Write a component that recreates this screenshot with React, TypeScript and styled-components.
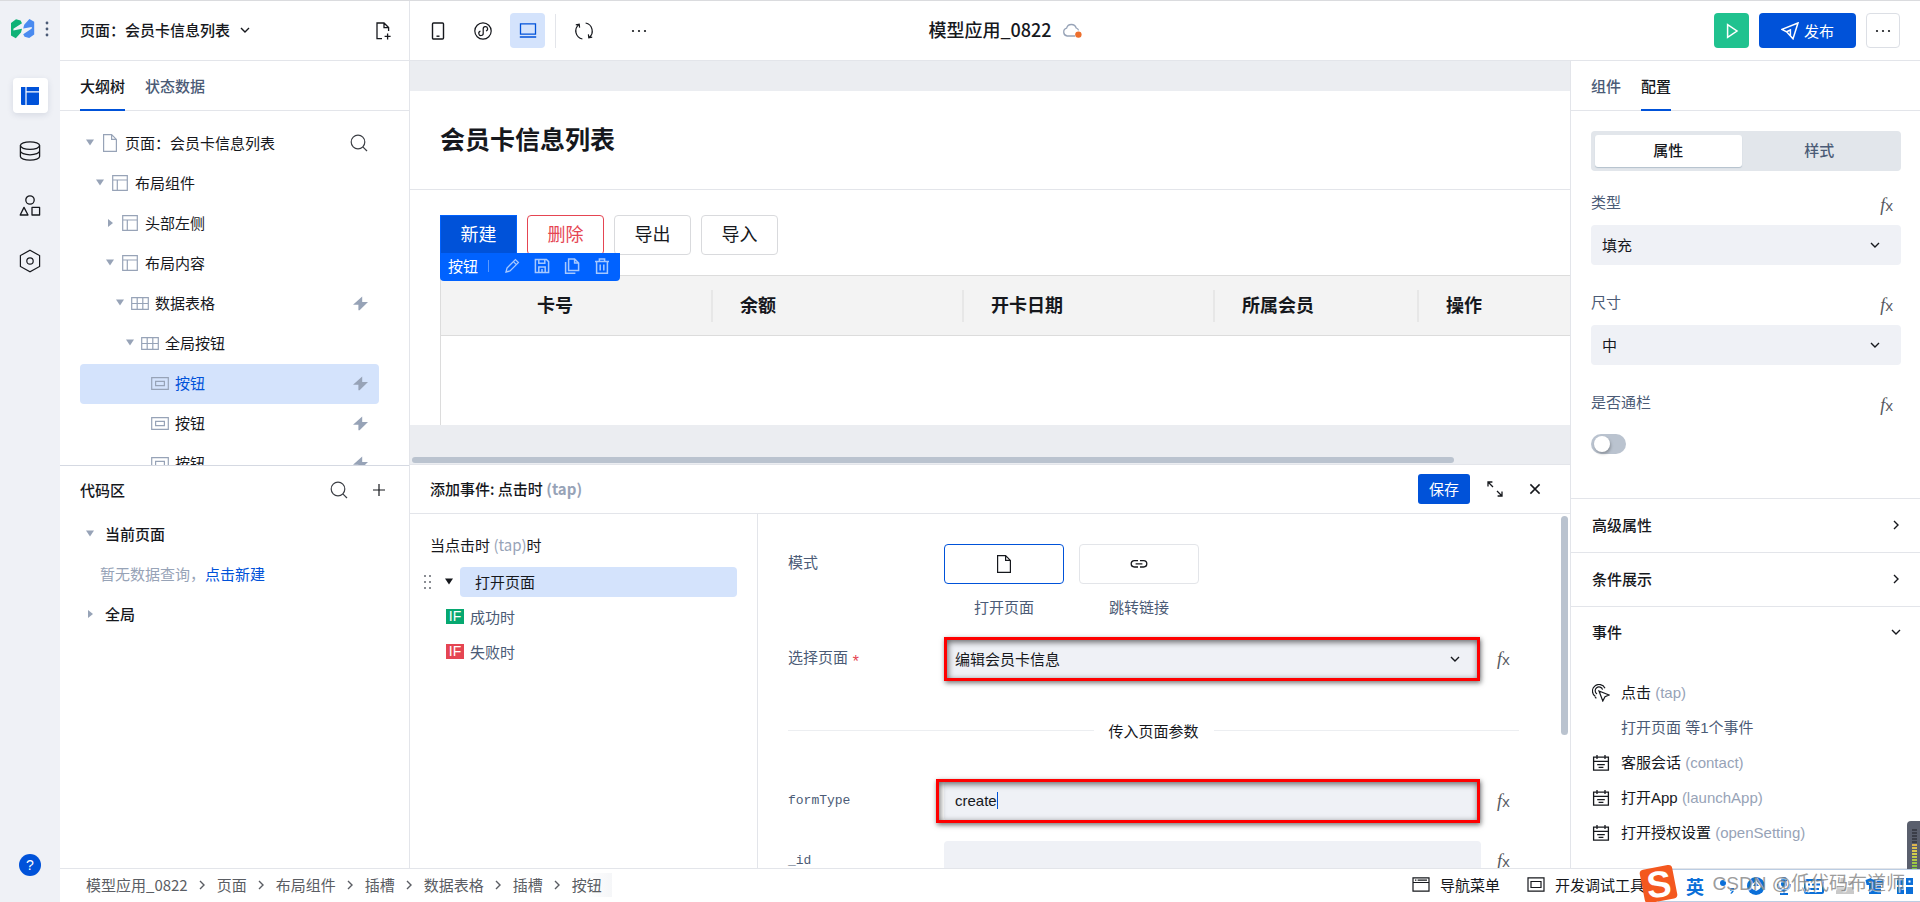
import React from "react";
import styled, { createGlobalStyle, css } from "styled-components";

const sans = `"Liberation Sans", "Noto Sans CJK SC", sans-serif`;
const cjk = `"Noto Sans CJK SC", "Noto Sans", sans-serif`;

const c = {
  blue: "#0052d9",
  bright: "#0062ff",
  paleBlue: "#d4e3fc",
  line: "#e3e5ea",
  rail: "#eff1f6",
  field: "#eff1f6",
  canvas: "#ebedf1",
  ink: "#16181d",
  slate: "#4b5b76",
  mist: "#97a3b7",
  bar: "#bac3cf",
  red: "#e54552",
};

const GlobalStyle = createGlobalStyle`
  * { box-sizing: border-box; }
  body { margin: 0; font: 15px/20px ${cjk}; color: ${c.ink}; background: #fff; overflow: hidden; }
  button, input, select { font: inherit; color: inherit; }
  h1, h2, ul, ol, p { margin: 0; padding: 0; font-size: inherit; }
  ul, ol { list-style: none; }
  a { text-decoration: none; }
  svg { display: block; flex: none; }
`;

/* ---------- shell ---------- */

const Shell = styled.div`
  display: grid;
  grid-template-columns: 60px minmax(0, 1fr);
  height: 100vh;
  border-top: 1px solid #dadbde;
  position: relative;
`;

const Rail = styled.nav`
  background: ${c.rail};
  display: flex;
  flex-direction: column;
  align-items: center;
  padding-bottom: 26px;
`;

const Brand = styled.div`
  display: flex;
  align-items: center;
  gap: 10px;
  height: 56px;
  margin-bottom: 21px;
`;

const IconButton = styled.button<{ $tone?: string }>`
  border: 0;
  padding: 0;
  background: none;
  width: 20px;
  height: 20px;
  color: ${(p) => p.$tone ?? c.ink};
  display: flex;
  align-items: center;
  justify-content: center;
  flex: none;
`;

const RailButton = styled(IconButton)<{ $active?: boolean }>`
  width: 35px;
  height: 35px;
  margin-bottom: 20px;
  border-radius: 4px;
  ${(p) =>
    p.$active &&
    css`
      background: #fff;
      color: ${c.blue};
      box-shadow: 0 2px 6px rgba(30, 50, 90, 0.12);
    `}
`;

const Help = styled.button`
  margin-top: auto;
  width: 22px;
  height: 22px;
  padding: 0;
  border: 0;
  border-radius: 50%;
  background: ${c.blue};
  color: #fff;
  font: 14px/22px ${sans};
`;

const Main = styled.div`
  display: grid;
  grid-template-rows: 60px minmax(0, 1fr) 34px;
  min-width: 0;
  min-height: 0;
`;

const columns = "350px minmax(0, 1fr) 350px";

/* ---------- header ---------- */

const Header = styled.header`
  display: grid;
  grid-template-columns: ${columns};
  border-bottom: 1px solid ${c.line};
`;

const PagePicker = styled.div`
  display: flex;
  align-items: center;
  padding: 0 16px 0 20px;
  border-right: 1px solid ${c.line};
  justify-content: space-between;
`;

const PickerButton = styled.button`
  display: flex;
  align-items: center;
  gap: 10px;
  border: 0;
  padding: 0 0 2px;
  background: none;
  font-weight: 500;
`;

const HeaderMiddle = styled.div`
  display: grid;
  grid-template-columns: 1fr auto 1fr;
  align-items: center;
`;

const Tools = styled.div`
  display: flex;
  align-items: center;
  padding-left: 10px;
  gap: 10px;
`;

const ToolGroup = styled.div`
  display: flex;
  gap: 20px;
`;

const ToolButton = styled(IconButton)<{ $active?: boolean }>`
  width: 35px;
  height: 35px;
  border-radius: 4px;
  ${(p) =>
    p.$active &&
    css`
      background: ${c.paleBlue};
      color: ${c.blue};
    `}
`;

const ToolDivider = styled.span`
  width: 1px;
  height: 34px;
  background: ${c.line};
`;

const AppName = styled.h1`
  font-size: 18px;
  line-height: 24px;
  font-weight: 500;
  padding-bottom: 3px;
`;

const CloudSlot = styled.div`
  padding-left: 10px;
`;

const HeaderActions = styled.div`
  display: flex;
  align-items: center;
  justify-content: flex-end;
  gap: 10px;
  padding-right: 20px;
`;

const ActionButton = styled.button<{ $kind: "run" | "publish" | "more" }>`
  height: 35px;
  width: ${(p) => (p.$kind === "publish" ? 97 : p.$kind === "run" ? 35 : 34)}px;
  border: ${(p) => (p.$kind === "more" ? "1px solid #dcdfe5" : "0")};
  border-radius: 4px;
  padding: 0;
  background: ${(p) =>
    p.$kind === "publish" ? c.blue : p.$kind === "run" ? "#20c28f" : "#fff"};
  color: ${(p) => (p.$kind === "more" ? c.ink : "#fff")};
  display: flex;
  align-items: center;
  justify-content: center;
  gap: 5px;
`;

/* ---------- workspace ---------- */

const Workspace = styled.div`
  display: grid;
  grid-template-columns: ${columns};
  min-height: 0;
`;

const LeftPanel = styled.aside`
  display: grid;
  grid-template-rows: 50% minmax(0, 1fr);
  min-height: 0;
  border-right: 1px solid ${c.line};
`;

const RightPanel = styled.aside`
  display: flex;
  flex-direction: column;
  min-height: 0;
  overflow: hidden;
  border-left: 1px solid ${c.line};
`;

const Half = styled.section`
  min-height: 0;
  overflow: hidden;
  & + & {
    border-top: 1px solid #d5d9e2;
  }
`;

const TabBar = styled.div`
  display: flex;
  flex: none;
  gap: 20px;
  height: 50px;
  padding-left: 20px;
  border-bottom: 1px solid ${c.line};
`;

const Tab = styled.button<{ $active?: boolean }>`
  border: 0;
  padding: 2px 0 0;
  height: 50px;
  background: none;
  font-weight: 500;
  color: ${(p) => (p.$active ? c.ink : c.slate)};
  border-bottom: 2px solid ${(p) => (p.$active ? c.blue : "transparent")};
`;

const Tree = styled.ul`
  padding: 13px 30px 0 20px;
`;

const TreeRow = styled.li<{ $level: number; $selected?: boolean }>`
  display: flex;
  align-items: center;
  height: 40px;
  padding: 0 11px 2px ${(p) => p.$level * 10}px;
  border-radius: 4px;
  color: ${(p) => (p.$selected ? c.blue : c.ink)};
  background: ${(p) => (p.$selected ? c.paleBlue : "transparent")};
`;

const TreeSlot = styled.span`
  width: 20px;
  color: ${c.mist};
  display: flex;
  justify-content: center;
`;

const TreeLabel = styled.span`
  flex: 1;
  padding-left: 5px;
`;

const Glyph = styled.span<{ $tone?: string; $bold?: boolean }>`
  color: ${(p) => p.$tone ?? c.mist};
  ${(p) => p.$bold && "font-weight: 700;"}
`;

const CodeHead = styled.div`
  display: flex;
  align-items: center;
  height: 48px;
  padding: 0 20px 0 20px;
`;

const CodeTitle = styled.h2`
  flex: 1;
  font-weight: 500;
`;

const CodeTools = styled.div`
  display: flex;
  gap: 20px;
`;

const CodeList = styled.div`
  padding: 0 20px;
`;

const CodeGroup = styled.div`
  display: flex;
  align-items: center;
  height: 40px;
  font-weight: 500;
`;

const CodeGroupName = styled.span`
  padding-left: 5px;
`;

const CodeEmpty = styled.p`
  height: 40px;
  line-height: 40px;
  padding-left: 20px;
  color: ${c.mist};
`;

const Link = styled.a`
  color: ${c.blue};
`;

const Center = styled.main`
  display: grid;
  grid-template-rows: calc(50% - 1px) minmax(0, 1fr);
  min-width: 0;
  min-height: 0;
`;

/* ---------- canvas ---------- */

const Canvas = styled.section`
  min-height: 0;
  min-width: 0;
  display: flex;
  flex-direction: column;
  background: ${c.canvas};
  padding-top: 30px;
`;

const Page = styled.div`
  flex: 1;
  min-height: 0;
  overflow: hidden;
  background: #fff;
`;

const PageHead = styled.div`
  height: 99px;
  padding: 31px 30px;
  border-bottom: 1px solid ${c.line};
`;

const PageTitle = styled.h2`
  font-size: 25px;
  line-height: 32px;
  font-weight: 700;
`;

const PageBody = styled.div`
  padding: 25px 0 0 30px;
`;

const ButtonRow = styled.div`
  display: flex;
  gap: 10px;
  margin-bottom: 20px;
  position: relative;
`;

const PageButton = styled.button<{ $kind?: "primary" | "danger" }>`
  width: 77px;
  height: 40px;
  padding: 0 0 5px;
  font-size: 18px;
  border-radius: 4px;
  border: 1px solid #d9dadd;
  background: #fff;
  ${(p) =>
    p.$kind === "primary" &&
    css`
      background: ${c.blue};
      border-color: ${c.bright};
      border-radius: 0;
      color: #fff;
    `}
  ${(p) =>
    p.$kind === "danger" &&
    css`
      border-color: ${c.red};
      color: ${c.red};
    `}
`;

const FloatingBar = styled.div`
  position: absolute;
  left: 0;
  top: 38px;
  height: 28px;
  width: 180px;
  display: flex;
  align-items: center;
  padding: 0 0 2px 8px;
  border-radius: 0 0 4px 4px;
  background: ${c.bright};
  color: #fff;
  white-space: nowrap;
`;

const FloatingRule = styled.span`
  flex: none;
  width: 1px;
  height: 12px;
  margin: 0 13px 0 10px;
  background: #5b9aff;
`;

const FloatingIcon = styled(IconButton)`
  margin-right: 10px;
  color: #a5c8ff;
`;

const DataTable = styled.table`
  width: 100%;
  table-layout: fixed;
  border-collapse: separate;
  border-spacing: 0;
  border: 1px solid #dcdcdc;
  border-right: 0;
`;

const HeadCell = styled.th<{ $width?: number }>`
  height: 60px;
  padding: 0;
  width: ${(p) => (p.$width ? `${p.$width}px` : "auto")};
  background: #f3f3f3;
  border-bottom: 1px solid #dcdcdc;
  text-align: left;
  font-size: 18px;
  font-weight: 700;
`;

const HeadText = styled.div<{ $rule?: boolean }>`
  height: 32px;
  line-height: 28px;
  padding-left: 27px;
  border-right: ${(p) => (p.$rule ? "2px solid #e7e7e7" : "0")};
`;

const EmptyCell = styled.td`
  height: 120px;
`;

const ScrollTrack = styled.div`
  height: 39px;
  padding: 32px 0 1px 2px;
`;

const ScrollThumb = styled.div`
  width: 90%;
  height: 6px;
  border-radius: 3px;
  background: ${c.bar};
`;

/* ---------- event editor ---------- */

const EventPanel = styled.section`
  min-height: 0;
  min-width: 0;
  display: flex;
  flex-direction: column;
  border-top: 1px solid ${c.line};
`;

const EventHead = styled.div`
  display: flex;
  align-items: center;
  height: 49px;
  flex: none;
  padding: 0 25px 0 20px;
  border-bottom: 1px solid ${c.line};
`;

const EventTitle = styled.h2`
  flex: 1;
  font-weight: 500;
`;

const SaveButton = styled.button`
  width: 52px;
  height: 30px;
  padding: 0;
  border: 0;
  border-radius: 3px;
  background: ${c.blue};
  color: #fff;
  margin-right: 15px;
`;

const EventTools = styled.div`
  display: flex;
  gap: 20px;
`;

const EventBody = styled.div`
  flex: 1;
  min-height: 0;
  display: grid;
  grid-template-columns: 348px minmax(0, 1fr);
`;

const Flow = styled.div`
  border-right: 1px solid ${c.line};
  padding: 20px 20px 0 10px;
`;

const FlowTitle = styled.p`
  padding-left: 10px;
  line-height: 22px;
  margin-bottom: 11px;
`;

const FlowStep = styled.div`
  display: flex;
  align-items: center;
  height: 30px;
  margin-bottom: 5px;
`;

const FlowHandle = styled.span`
  width: 40px;
  display: flex;
  align-items: center;
  justify-content: space-between;
  padding: 0 6px 0 4px;
`;

const FlowName = styled.span`
  flex: 1;
  line-height: 30px;
  padding-left: 15px;
  border-radius: 4px;
  background: ${c.paleBlue};
`;

const Branch = styled(FlowStep)`
  padding-left: 26px;
  gap: 6px;
  color: ${c.slate};
`;

const BranchTag = styled.span<{ $tone: string }>`
  width: 18px;
  height: 15px;
  background: ${(p) => p.$tone};
  color: #fff;
  font: 14px/15px ${sans};
  text-align: center;
`;

const Form = styled.form`
  position: relative;
  overflow: hidden;
  padding: 30px 51px 0 30px;
  display: flex;
  flex-direction: column;
  gap: 20px;
`;

const FormScroll = styled.div`
  position: absolute;
  right: 2px;
  top: 2px;
  width: 7px;
  height: 62%;
  border-radius: 4px;
  background: ${c.bar};
`;

const Field = styled.div`
  display: grid;
  grid-template-columns: 156px minmax(0, 1fr) 38px;
`;

const FieldLabel = styled.label<{ $code?: boolean }>`
  line-height: 35px;
  color: ${c.slate};
  ${(p) =>
    p.$code &&
    css`
      line-height: 40px;
      font-family: "Liberation Mono", monospace;
      font-size: 13px;
    `}
`;

const Required = styled.span`
  color: ${c.red};
  padding-left: 3px;
  font: 16px/16px "Liberation Mono", monospace;
  vertical-align: -4px;
`;

const Modes = styled.div`
  display: flex;
  gap: 15px;
`;

const Mode = styled.div`
  display: flex;
  flex-direction: column;
  align-items: center;
  gap: 12px;
  line-height: 22px;
  padding-bottom: 1px;
  color: ${c.slate};
`;

const ModeButton = styled.button<{ $active?: boolean }>`
  width: 120px;
  height: 40px;
  padding: 0;
  background: #fff;
  border: 1px solid ${(p) => (p.$active ? c.blue : "#e3e5e9")};
  border-radius: 4px;
  color: ${c.ink};
  display: flex;
  align-items: center;
  justify-content: center;
`;

const Control = styled.div`
  position: relative;
  height: 40px;
`;

const boxStyle = css`
  width: 100%;
  height: 40px;
  border: 0;
  border-radius: 4px;
  background: ${c.field};
  padding: 0 11px;
  outline: 0;
  appearance: none;
`;

const Select = styled.select`
  ${boxStyle}
  line-height: 20px;
`;

const TextBox = styled.input`
  ${boxStyle}
  font-family: ${sans};
`;

const SelectArrow = styled.span`
  position: absolute;
  right: 21px;
  top: 15px;
  pointer-events: none;
`;

const Caret = styled.span`
  position: absolute;
  left: 53px;
  top: 11px;
  width: 1px;
  height: 17px;
  background: ${c.blue};
`;

const Highlight = styled.span<{ $bleed?: boolean }>`
  position: absolute;
  top: -2px;
  bottom: -2px;
  left: ${(p) => (p.$bleed ? -8 : 0)}px;
  right: 1px;
  border: 3px solid #fe0000;
  box-shadow: 1px 2px 5px rgba(0, 0, 0, 0.55), inset 1px 2px 6px rgba(0, 0, 0, 0.6);
  pointer-events: none;
`;

const FxButton = styled.button`
  border: 0;
  padding: 0 0 0 16px;
  background: none;
  height: 40px;
  text-align: left;
  color: #55585e;
  font: 15px/40px "Open Sans", ${sans};
`;

const FxLetter = styled.i`
  font: italic 18px/20px "Liberation Serif", serif;
`;

const Split = styled.div`
  display: flex;
  align-items: center;
  gap: 15px;
  line-height: 24px;
  margin: 20px 0 18px;
  &::before,
  &::after {
    content: "";
    flex: 1;
    height: 1px;
    background: #eceef1;
  }
`;

/* ---------- configuration ---------- */

const Settings = styled.div`
  flex: none;
  height: 388px;
  padding: 20px 19px 0 20px;
  border-bottom: 1px solid ${c.line};
`;

const Segments = styled.div`
  display: grid;
  grid-template-columns: 49fr 52fr;
  height: 40px;
  padding: 4px;
  border-radius: 4px;
  background: #e2e6eb;
  margin-bottom: 14px;
`;

const Segment = styled.button<{ $active?: boolean }>`
  border: 0;
  padding: 0 0 2px;
  border-radius: 3px;
  font-weight: 500;
  color: ${(p) => (p.$active ? c.ink : c.slate)};
  background: ${(p) => (p.$active ? "#fff" : "transparent")};
  box-shadow: ${(p) => (p.$active ? "0 1px 1px #b4c0cc" : "none")};
`;

const Setting = styled.div`
  height: 100px;
`;

const SettingHead = styled.div`
  display: flex;
  align-items: center;
  justify-content: space-between;
  height: 40px;
  padding-right: 8px;
`;

const SettingLabel = styled.label`
  color: ${c.slate};
  line-height: 34px;
  height: 40px;
`;

const Toggle = styled.input`
  appearance: none;
  display: block;
  width: 35px;
  height: 20px;
  margin: 9px 0 0;
  border-radius: 10px;
  background: ${c.bar};
  padding: 2px 3px;
  &::before {
    content: "";
    display: block;
    width: 16px;
    height: 16px;
    border-radius: 50%;
    background: #fff;
    box-shadow: 1px 2px 3px rgba(0, 0, 0, 0.25);
  }
`;

const Fold = styled.button<{ $open?: boolean }>`
  display: flex;
  align-items: center;
  justify-content: space-between;
  flex: none;
  width: 100%;
  height: ${(p) => (p.$open ? 52 : 54)}px;
  padding: 0 19px 2px 21px;
  border: 0;
  border-bottom: ${(p) => (p.$open ? "0" : `1px solid ${c.line}`)};
  background: none;
  font-weight: 500;
`;

const EventList = styled.ul`
  padding: 16px 0 0 21px;
`;

const EventItem = styled.li<{ $muted?: boolean }>`
  display: flex;
  align-items: center;
  height: 35px;
  font-family: ${sans};
  color: ${(p) => (p.$muted ? c.slate : c.ink)};
  padding-left: ${(p) => (p.$muted ? 29 : 0)}px;
`;

const EventText = styled.span<{ $icon?: boolean }>`
  padding-left: ${(p) => (p.$icon ? 11 : 0)}px;
`;

/* ---------- footer ---------- */

const Footer = styled.footer`
  display: flex;
  justify-content: space-between;
  border-top: 1px solid ${c.line};
  padding-bottom: 2px;
`;

const Crumbs = styled.ol`
  display: flex;
  align-items: center;
  padding-left: 26px;
  color: #5a5d63;
`;

const Crumb = styled.li`
  display: flex;
  align-items: center;
  height: 24px;
  &:last-child {
    padding-right: 10px;
    background: linear-gradient(90deg, #fff 60%, #f5f6f8);
  }
`;

const CrumbArrow = styled.span`
  width: 29px;
  display: flex;
  justify-content: center;
`;

const FooterTools = styled.div`
  display: flex;
  align-items: center;
  gap: 27px;
  padding-right: 275px;
`;

const FooterButton = styled.button`
  display: flex;
  align-items: center;
  gap: 10px;
  border: 0;
  padding: 0;
  background: none;
`;

/* ---------- desktop overlays ---------- */

const InputBar = styled.div`
  position: absolute;
  right: 0;
  bottom: 0;
  width: 262px;
  height: 33px;
  border: 1px solid #bccde2;
  border-right: 0;
  background: #fff;
  display: flex;
  align-items: center;
  padding-left: 27px;
  color: #0b6fd8;
  font-weight: 700;
  font-size: 18px;
`;

const InputBarIcons = styled.div`
  display: flex;
  flex: 1;
  justify-content: space-between;
  padding: 0 6px 0 14px;
`;

const InputLogo = styled.div`
  position: absolute;
  right: 241px;
  bottom: 0;
`;

const Watermark = styled.span`
  position: absolute;
  right: 15px;
  bottom: 4px;
  font: 19px/28px ${sans};
  color: rgba(130, 130, 130, 0.8);
  text-shadow: 1px 1px 0 rgba(255, 255, 255, 0.7);
`;

const Meter = styled.div`
  position: absolute;
  right: 0;
  bottom: 33px;
  width: 13px;
  height: 48px;
  border-radius: 4px 0 0 0;
  background: #5a5f6d;
  padding: 8px 3px 0 5px;
`;

const MeterBars = styled.div`
  height: 40px;
  background: repeating-linear-gradient(180deg, transparent 0 2px, #5a5f6d 2px 3px),
    linear-gradient(180deg, #3b3e48 0 36%, #e0b050 36%, #d8d04c 60%, #7cc242);
`;

/* ---------- icons ---------- */

type IconProps = {
  w?: number;
  h?: number;
  box?: string;
  sw?: number;
  fill?: string;
  children: React.ReactNode;
};

const Svg = ({ w = 18, h, box, sw = 1.2, fill = "none", children }: IconProps) => (
  <svg
    width={w}
    height={h ?? w}
    viewBox={box ?? `0 0 ${w} ${h ?? w}`}
    fill={fill}
    stroke={fill === "none" ? "currentColor" : "none"}
    strokeWidth={sw}
    aria-hidden="true"
  >
    {children}
  </svg>
);

const Chevron = ({ dir = "down" }: { dir?: "down" | "right" }) => (
  <Svg w={10} sw={1.4}>
    <path d={dir === "down" ? "M1 3l4 4 4-4" : "M3 1l4 4-4 4"} />
  </Svg>
);

const Triangle = ({ dir = "down" }: { dir?: "down" | "right" }) => (
  <Svg w={10} fill="currentColor">
    <path d={dir === "down" ? "M1 1.5h8L5 7.5z" : "M3 1l5 4-5 4z"} />
  </Svg>
);

const DocIcon = () => (
  <Svg w={18}>
    <path d="M2.6 .6h8l4.8 4.8v12H2.6zM10.6 .6v4.8h4.8" />
  </Svg>
);

const LayoutIcon = () => (
  <Svg w={16}>
    <path d="M.7.7h14.6v14.6H.7zM.7 5h14.6M5.3 5v10.3" />
  </Svg>
);

const GridIcon = () => (
  <Svg w={18} h={13}>
    <path d="M.7.7h16.6v11.6H.7zM.7 6.5h16.6M6.2.7v11.6M11.8.7v11.6" />
  </Svg>
);

const ButtonIcon = () => (
  <Svg w={18} h={13}>
    <path d="M.7.7h16.6v11.6H.7zM4.6 4.4h8.8v4.2H4.6z" />
  </Svg>
);

const Bolt = () => (
  <Svg w={15} fill="currentColor">
    <path d="M9.2 .4 0 8.7h5.4v5.6h1.2L15 5.900H9.2z" />
  </Svg>
);

const SearchIcon = () => (
  <Svg w={18}>
    <circle cx="8" cy="8" r="6.8" />
    <path d="M12.8 12.8 17 17" />
  </Svg>
);

const Dots = () => (
  <Svg w={16} h={4} fill="currentColor">
    <circle cx="2" cy="2" r="1.1" />
    <circle cx="8" cy="2" r="1.1" />
    <circle cx="14" cy="2" r="1.1" />
  </Svg>
);

const WindowIcon = () => (
  <Svg w={18} h={15}>
    <path d="M1 .8h16v13.4H1zM1 5.5h16M3 3.2h1.4M5.6 3.2H15" />
  </Svg>
);

const PanelIcon = () => (
  <Svg w={18} h={15}>
    <path d="M1 .8h16v13.4H1zM4 4.5h10v6H4z" />
  </Svg>
);

const CalendarIcon = () => (
  <Svg w={18} sw={1.3}>
    <path d="M1.6 3.2h14.8v13H1.6zM1.6 7.4h14.8M5 1v4M13 1v4M5.2 10.6h7.6M6.6 13.4h4.8" />
  </Svg>
);

const TapIcon = () => (
  <Svg w={18}>
    <path d="M7 7l10 4-4 1.8L10.8 17zM3.4 12.6A6.6 6.6 0 1 1 13 4.2M5 10A3.8 3.8 0 1 1 10.6 5.6" />
    <path d="M3 13.2l1.4 1" />
  </Svg>
);

/* ---------- data ---------- */

type Node = {
  label: string;
  level: number;
  icon: React.ReactNode;
  arrow?: "down" | "right";
  tail?: "bolt" | "search";
  selected?: boolean;
};

const nodes: Node[] = [
  { label: "页面：会员卡信息列表", level: 0, icon: <DocIcon />, arrow: "down", tail: "search" },
  { label: "布局组件", level: 1, icon: <LayoutIcon />, arrow: "down" },
  { label: "头部左侧", level: 2, icon: <LayoutIcon />, arrow: "right" },
  { label: "布局内容", level: 2, icon: <LayoutIcon />, arrow: "down" },
  { label: "数据表格", level: 3, icon: <GridIcon />, arrow: "down", tail: "bolt" },
  { label: "全局按钮", level: 4, icon: <GridIcon />, arrow: "down" },
  { label: "按钮", level: 5, icon: <ButtonIcon />, tail: "bolt", selected: true },
  { label: "按钮", level: 5, icon: <ButtonIcon />, tail: "bolt" },
  { label: "按钮", level: 5, icon: <ButtonIcon />, tail: "bolt" },
];

const tableColumns = [
  { name: "", width: 69, rule: false },
  { name: "卡号", width: 203, rule: true },
  { name: "余额", width: 251, rule: true },
  { name: "开卡日期", width: 251, rule: true },
  { name: "所属会员", width: 204, rule: true },
  { name: "操作", width: 0, rule: false },
];

const events = [
  { name: "客服会话", code: "(contact)" },
  { name: "打开App", code: "(launchApp)" },
  { name: "打开授权设置", code: "(openSetting)" },
];

const crumbs = ["模型应用_0822", "页面", "布局组件", "插槽", "数据表格", "插槽", "按钮"];

const Fx = () => (
  <FxButton type="button" aria-label="表达式">
    <FxLetter>f</FxLetter>x
  </FxButton>
);

/* ---------- sections ---------- */

const SideRail = () => (
  <Rail>
    <Brand>
      <Svg w={24} h={20} fill="currentColor">
        <path d="M0 4 5 .3 9.6 1.6 11 4.2 2.4 9.8 2.4 11.4 11 9.8 10 13.6 4.8 19.3 0 16.6z" fill="#0fb277" />
        <path d="M23.2 15.4 18.2 19.1 13.6 17.8 12.2 15.2 20.8 9.6 20.8 8 12.2 9.6 13.2 5.8 18.4 .1 23.2 2.8z" fill="#4a8bf0" />
      </Svg>
      <Svg w={4} h={16} fill={c.slate}>
        <circle cx="2" cy="2" r="1.4" />
        <circle cx="2" cy="8" r="1.4" />
        <circle cx="2" cy="14" r="1.4" />
      </Svg>
    </Brand>
    <RailButton $active aria-label="布局">
      <Svg w={20} fill="currentColor">
        <path d="M1 1h4.4v18H2a1 1 0 0 1-1-1zM6.6 1H19v4.2H6.6zM6.6 6.4H19V18a1 1 0 0 1-1 1H6.6z" />
      </Svg>
    </RailButton>
    <RailButton aria-label="数据">
      <Svg w={22} h={20} sw={1.3}>
        <ellipse cx="11" cy="4.6" rx="9.6" ry="3.8" />
        <path d="M1.4 4.6v10.8c0 2.1 4.3 3.8 9.6 3.8s9.6-1.7 9.6-3.8V4.6M1.4 10c0 2.1 4.3 3.8 9.6 3.8s9.6-1.7 9.6-3.8" />
      </Svg>
    </RailButton>
    <RailButton aria-label="组件">
      <Svg w={22} h={21} sw={1.3}>
        <circle cx="11" cy="5" r="4.2" />
        <path d="M5 12.4l4 7.6H1.2zM13 12.4h7.6V20H13z" strokeLinejoin="round" />
      </Svg>
    </RailButton>
    <RailButton aria-label="设置">
      <Svg w={22} h={24}>
        <path d="M11 1.2 20.6 6.6v10.8L11 22.8 1.4 17.4V6.6z" />
        <circle cx="11" cy="12" r="3.2" />
      </Svg>
    </RailButton>
    <Help aria-label="帮助">?</Help>
  </Rail>
);

const TopBar = () => (
  <Header>
    <PagePicker>
      <PickerButton>
        页面：会员卡信息列表
        <Chevron />
      </PickerButton>
      <IconButton aria-label="新建页面">
        <Svg w={18} sw={1.3}>
          <path d="M8 16.6H3V1h7l4.6 4.6V9M10 1v4.6h4.6M13.6 11.4v6M10.6 14.4h6" />
        </Svg>
      </IconButton>
    </PagePicker>
    <HeaderMiddle>
      <Tools>
        <ToolButton aria-label="手机">
          <Svg w={14} h={18} sw={1.4}>
            <rect x="1.5" y="1" width="11" height="16" rx="1" />
            <path d="M5.5 14.2h3" />
          </Svg>
        </ToolButton>
        <ToolButton aria-label="小程序">
          <Svg w={18}>
            <circle cx="9" cy="9" r="8.2" />
            <path d="M9.2 7v4.2a2.2 2.2 0 1 1-2.8-2M9.2 7a2.2 2.2 0 1 1 2.8 2" />
          </Svg>
        </ToolButton>
        <ToolButton $active aria-label="电脑">
          <Svg w={18} h={15} sw={1.3}>
            <path d="M1.5 .8h15v10.4h-15zM.8 14h16.4" />
          </Svg>
        </ToolButton>
        <ToolDivider />
        <ToolGroup>
          <ToolButton aria-label="刷新">
            <Svg w={20}>
              <path d="M4.8 3.6A8.2 8.2 0 0 0 8.4 18M15.2 16.4A8.2 8.2 0 0 0 11.6 2M1.8 3.8l3.4-.6.4 3.4M18.2 16.2l-3.4.6-.4-3.4" />
            </Svg>
          </ToolButton>
          <ToolButton aria-label="更多">
            <Dots />
          </ToolButton>
        </ToolGroup>
      </Tools>
      <AppName>模型应用_0822</AppName>
      <CloudSlot>
        <Svg w={22} h={16} sw={1.3}>
          <path
            d="M13 13H5.2A4 4 0 0 1 4.6 5.2 5 5 0 0 1 14.2 5a3.6 3.6 0 0 1 2.4 2.4"
            stroke={c.mist}
          />
          <circle cx="16.4" cy="11.6" r="3.2" fill="#ed6f2d" stroke="none" />
        </Svg>
      </CloudSlot>
    </HeaderMiddle>
    <HeaderActions>
      <ActionButton $kind="run" aria-label="运行">
        <Svg w={14} h={16} sw={1.5}>
          <path d="M2.6 1.6 12 8l-9.4 6.4z" />
        </Svg>
      </ActionButton>
      <ActionButton $kind="publish">
        <Svg w={18} sw={1.5}>
          <path d="M17 1 1 7.4l4.6 2.4L12 16.8zM5.6 9.8 9.4 8v6" />
        </Svg>
        发布
      </ActionButton>
      <ActionButton $kind="more" aria-label="更多操作">
        <Dots />
      </ActionButton>
    </HeaderActions>
  </Header>
);

const Outline = () => (
  <LeftPanel>
    <Half>
      <TabBar>
        <Tab $active>大纲树</Tab>
        <Tab>状态数据</Tab>
      </TabBar>
      <Tree>
        {nodes.map((n, i) => (
          <TreeRow key={i} $level={n.level} $selected={n.selected}>
            <TreeSlot>{n.arrow && <Triangle dir={n.arrow} />}</TreeSlot>
            <TreeSlot>{n.icon}</TreeSlot>
            <TreeLabel>{n.label}</TreeLabel>
            {n.tail && (
              <Glyph $tone={n.tail === "search" ? "#3c3f45" : c.mist}>
                {n.tail === "search" ? <SearchIcon /> : <Bolt />}
              </Glyph>
            )}
          </TreeRow>
        ))}
      </Tree>
    </Half>
    <Half>
      <CodeHead>
        <CodeTitle>代码区</CodeTitle>
        <CodeTools>
          <IconButton aria-label="搜索" $tone="#3c3f45">
            <SearchIcon />
          </IconButton>
          <IconButton aria-label="新增">
            <Svg w={14}>
              <path d="M7 1v12M1 7h12" />
            </Svg>
          </IconButton>
        </CodeTools>
      </CodeHead>
      <CodeList>
        <CodeGroup>
          <TreeSlot>
            <Triangle />
          </TreeSlot>
          <CodeGroupName>当前页面</CodeGroupName>
        </CodeGroup>
        <CodeEmpty>
          暂无数据查询，<Link href="#new">点击新建</Link>
        </CodeEmpty>
        <CodeGroup>
          <TreeSlot>
            <Triangle dir="right" />
          </TreeSlot>
          <CodeGroupName>全局</CodeGroupName>
        </CodeGroup>
      </CodeList>
    </Half>
  </LeftPanel>
);

const CanvasArea = () => (
  <Canvas>
    <Page>
      <PageHead>
        <PageTitle>会员卡信息列表</PageTitle>
      </PageHead>
      <PageBody>
        <ButtonRow>
          <PageButton $kind="primary">新建</PageButton>
          <PageButton $kind="danger">删除</PageButton>
          <PageButton>导出</PageButton>
          <PageButton>导入</PageButton>
          <FloatingBar>
            按钮
            <FloatingRule />
            <FloatingIcon aria-label="编辑">
              <Svg w={16} sw={1.3}>
                <path d="M2 14l1-4L11.4 1.6l3 3L6 13zM9.4 3.6l3 3" />
              </Svg>
            </FloatingIcon>
            <FloatingIcon aria-label="保存">
              <Svg w={16} sw={1.5}>
                <path d="M1.4 1.4h11l2.2 2.2v11H1.4zM4.8 1.4v3.8h6V1.4M4.8 14.6V9h6.4v5.6M8 11v3" />
              </Svg>
            </FloatingIcon>
            <FloatingIcon aria-label="复制">
              <Svg w={16} sw={1.5}>
                <path d="M4.6 1h6l4 4v7.6h-10zM10.6 1v4h4M1.6 4v11.2h9.8" />
              </Svg>
            </FloatingIcon>
            <FloatingIcon aria-label="删除">
              <Svg w={16} sw={1.5}>
                <path d="M1 3.6h14M5.4 3.4V1h5.2v2.4M2.6 3.6v11.6h10.8V3.6M6.2 6.4v6M9.8 6.4v6" />
              </Svg>
            </FloatingIcon>
          </FloatingBar>
        </ButtonRow>
        <DataTable>
          <thead>
            <tr>
              {tableColumns.map((col, i) => (
                <HeadCell key={i} $width={col.width} scope="col">
                  <HeadText $rule={col.rule}>{col.name}</HeadText>
                </HeadCell>
              ))}
            </tr>
          </thead>
          <tbody>
            <tr>
              <EmptyCell colSpan={6} />
            </tr>
          </tbody>
        </DataTable>
      </PageBody>
    </Page>
    <ScrollTrack>
      <ScrollThumb />
    </ScrollTrack>
  </Canvas>
);

const EventEditor = () => (
  <EventPanel>
    <EventHead>
      <EventTitle>
        添加事件: 点击时 <Glyph $bold>(tap)</Glyph>
      </EventTitle>
      <SaveButton>保存</SaveButton>
      <EventTools>
        <IconButton aria-label="展开">
          <Svg w={16} sw={1.3}>
            <path d="M1 5.4V1h4.4M1 1l5 5M15 10.6V15h-4.4M15 15l-5-5" />
          </Svg>
        </IconButton>
        <IconButton aria-label="关闭">
          <Svg w={12} sw={1.5}>
            <path d="M1.4 1.4l9.2 9.2M10.6 1.4l-9.2 9.2" />
          </Svg>
        </IconButton>
      </EventTools>
    </EventHead>
    <EventBody>
      <Flow>
        <FlowTitle>
          当点击时 <Glyph>(tap)</Glyph>时
        </FlowTitle>
        <FlowStep>
          <FlowHandle>
            <Svg w={8} h={16} fill="#8a8d93">
              {[1, 7, 13].map((y) => (
                <React.Fragment key={y}>
                  <rect x="0" y={y} width="2" height="2" />
                  <rect x="5" y={y} width="2" height="2" />
                </React.Fragment>
              ))}
            </Svg>
            <Triangle />
          </FlowHandle>
          <FlowName>打开页面</FlowName>
        </FlowStep>
        <Branch>
          <BranchTag $tone="#06a870">IF</BranchTag>成功时
        </Branch>
        <Branch>
          <BranchTag $tone={c.red}>IF</BranchTag>失败时
        </Branch>
      </Flow>
      <Form>
        <Field>
          <FieldLabel as="span">模式</FieldLabel>
          <Modes>
            <Mode>
              <ModeButton type="button" $active aria-label="打开页面">
                <DocIcon />
              </ModeButton>
              打开页面
            </Mode>
            <Mode>
              <ModeButton type="button" aria-label="跳转链接">
                <Svg w={18} h={10} sw={1.3}>
                  <path d="M8 1.6H4.4a3.2 3.2 0 0 0 0 6.4H8M10 1.6h3.6a3.2 3.2 0 0 1 0 6.4H10M5.6 4.8h6.8" />
                </Svg>
              </ModeButton>
              跳转链接
            </Mode>
          </Modes>
        </Field>
        <Field>
          <FieldLabel htmlFor="target">
            选择页面<Required>*</Required>
          </FieldLabel>
          <Control>
            <Select id="target">
              <option>编辑会员卡信息</option>
            </Select>
            <SelectArrow>
              <Chevron />
            </SelectArrow>
            <Highlight />
          </Control>
          <Fx />
        </Field>
        <Split>传入页面参数</Split>
        <Field>
          <FieldLabel htmlFor="formType" $code>
            formType
          </FieldLabel>
          <Control>
            <TextBox id="formType" defaultValue="create" />
            <Caret />
            <Highlight $bleed />
          </Control>
          <Fx />
        </Field>
        <Field>
          <FieldLabel htmlFor="recordId" $code>
            _id
          </FieldLabel>
          <Control>
            <TextBox id="recordId" />
          </Control>
          <Fx />
        </Field>
        <FormScroll />
      </Form>
    </EventBody>
  </EventPanel>
);

const SelectSetting = ({ id, label, value }: { id: string; label: string; value: string }) => (
  <Setting>
    <SettingHead>
      <SettingLabel htmlFor={id}>{label}</SettingLabel>
      <Fx />
    </SettingHead>
    <Control>
      <Select id={id}>
        <option>{value}</option>
      </Select>
      <SelectArrow>
        <Chevron />
      </SelectArrow>
    </Control>
  </Setting>
);

const Configuration = () => (
  <RightPanel>
    <TabBar>
      <Tab>组件</Tab>
      <Tab $active>配置</Tab>
    </TabBar>
    <Settings>
      <Segments>
        <Segment $active>属性</Segment>
        <Segment>样式</Segment>
      </Segments>
      <SelectSetting id="kind" label="类型" value="填充" />
      <SelectSetting id="size" label="尺寸" value="中" />
      <Setting>
        <SettingHead>
          <SettingLabel htmlFor="block">是否通栏</SettingLabel>
          <Fx />
        </SettingHead>
        <Toggle id="block" type="checkbox" role="switch" />
      </Setting>
    </Settings>
    <Fold>
      高级属性
      <Chevron dir="right" />
    </Fold>
    <Fold>
      条件展示
      <Chevron dir="right" />
    </Fold>
    <Fold $open>
      事件
      <Chevron />
    </Fold>
    <EventList>
      <EventItem>
        <TapIcon />
        <EventText $icon>
          点击 <Glyph>(tap)</Glyph>
        </EventText>
      </EventItem>
      <EventItem $muted>
        <EventText>打开页面 等1个事件</EventText>
      </EventItem>
      {events.map((e) => (
        <EventItem key={e.code}>
          <CalendarIcon />
          <EventText $icon>
            {e.name} <Glyph>{e.code}</Glyph>
          </EventText>
        </EventItem>
      ))}
    </EventList>
  </RightPanel>
);

const StatusBar = () => (
  <Footer>
    <Crumbs>
      {crumbs.map((name, i) => (
        <Crumb key={i}>
          {i > 0 && (
            <CrumbArrow>
              <Chevron dir="right" />
            </CrumbArrow>
          )}
          {name}
        </Crumb>
      ))}
    </Crumbs>
    <FooterTools>
      <FooterButton>
        <WindowIcon />
        导航菜单
      </FooterButton>
      <FooterButton>
        <PanelIcon />
        开发调试工具
      </FooterButton>
    </FooterTools>
  </Footer>
);

const InputMethod = () => (
  <>
    <Meter>
      <MeterBars />
    </Meter>
    <InputBar>
      英
      <InputBarIcons>
        <Svg w={18} fill="currentColor">
          <circle cx="5" cy="6" r="3" />
          <path d="M12 11h4c.4 3-.8 5-3 6l-.6-1c1-.6 1.4-1.2 1.4-2H12z" />
        </Svg>
        <Svg w={18} fill="currentColor">
          <circle cx="9" cy="9" r="9" />
          <path d="M4 8c0 7 10 7 10 0l-5-4z" fill="#fff" />
          <path d="M9 5l3 4H6z" />
        </Svg>
        <Svg w={18} fill="currentColor">
          <rect x="6" y="0" width="6" height="10" rx="3" />
          <path d="M2 7h2c0 7 10 7 10 0h2c0 4-2.5 6.4-6 6.9V16h3v2H5v-2h3v-2.1C4.5 13.4 2 11 2 7z" />
        </Svg>
        <Svg w={20} h={18} sw={2}>
          <rect x="1" y="3" width="18" height="13" rx="1" />
          <path d="M4 7.5h2M8 7.5h2M12 7.5h4M5 12h10" />
        </Svg>
        <Svg w={20} h={18} fill="#c9c9c9">
          <path d="M5 1h6v6H5zM1 10h18v7H1zM13 4h5v4h-5z" />
        </Svg>
        <Svg w={20} h={18} fill="currentColor">
          <path d="M6 1c1 2 7 2 8 0l5.5 2-1 5H16v9H4V8H1.5l-1-5z" />
        </Svg>
        <Svg w={18} fill="currentColor">
          <path d="M1 1h7v7H1zM1 10h7v7H1zM10 10h7v7h-7z" />
          <path d="M10 1h7v7h-7zM12.5 3.5v2h2v-2z" fillRule="evenodd" />
        </Svg>
      </InputBarIcons>
    </InputBar>
    <InputLogo>
      <Svg w={40} h={38} fill="currentColor">
        <rect x="3" y="3" width="33" height="34" rx="4" fill="#f4581f" transform="rotate(-11 20 20)" />
        <text
          x="20"
          y="33"
          fill="#fff"
          fontFamily="Liberation Sans, sans-serif"
          fontWeight="700"
          fontSize="37"
          textAnchor="middle"
          transform="rotate(-6 20 20)"
        >
          S
        </text>
      </Svg>
    </InputLogo>
    <Watermark>CSDN @低代码布道师</Watermark>
  </>
);

export default function App() {
  return (
    <>
      <GlobalStyle />
      <Shell>
        <SideRail />
        <Main>
          <TopBar />
          <Workspace>
            <Outline />
            <Center>
              <CanvasArea />
              <EventEditor />
            </Center>
            <Configuration />
          </Workspace>
          <StatusBar />
        </Main>
        <InputMethod />
      </Shell>
    </>
  );
}
